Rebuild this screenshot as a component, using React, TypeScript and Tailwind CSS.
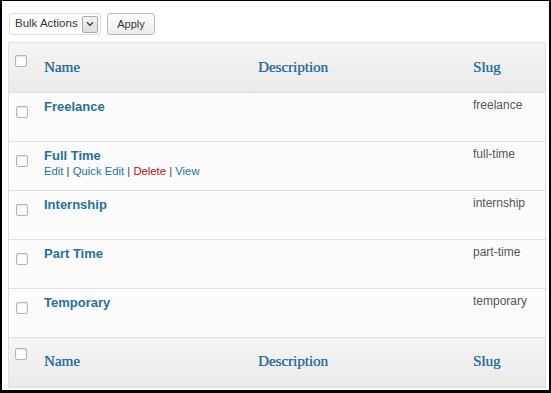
import React from "react";

function Box({ className = "" }: { className?: string }) {
  return (
    <div
      className={
        "w-[12px] h-[12px] border border-[#b4b4b4] rounded-[2px] bg-white shadow-[inset_0_1px_2px_rgba(0,0,0,0.12)] " +
        className
      }
    />
  );
}

const rows = [
  { name: "Freelance", slug: "freelance", actions: false },
  { name: "Full Time", slug: "full-time", actions: true },
  { name: "Internship", slug: "internship", actions: false },
  { name: "Part Time", slug: "part-time", actions: false },
  { name: "Temporary", slug: "temporary", actions: false },
];

function HeadRow({ footer }: { footer?: boolean }) {
  return (
    <div
      className={
        "grid grid-cols-[27px_214px_215px_1fr] h-[49px] bg-gradient-to-b from-[#f5f5f5] to-[#eaeaea] " +
        (footer ? "" : "border-b border-[#dfdfdf] h-[50px]")
      }
    >
      <div className={footer ? "pt-[10px] pl-[6px]" : "pt-[12px] pl-[6px]"}>
        <Box />
      </div>
      {["Name", "Description", "Slug"].map((t) => (
        <div
          key={t}
          className={
            "pl-[8px] font-['Liberation_Serif',serif] text-[15px] leading-[20px] text-[#2f7098] [text-shadow:0.35px_0_0_#2f7098] " +
            (footer ? "pt-[13px]" : "pt-[14px]")
          }
        >
          {t}
        </div>
      ))}
    </div>
  );
}

export default function App() {
  return (
    <div className="w-[551px] h-[393px] bg-white border-black border-l-2 border-r-2 border-t border-b-[3px] overflow-hidden font-['Liberation_Sans',Arial,sans-serif]">
      <div className="flex items-center pl-[7px] pt-[12px]">
        <div className="w-[92px] h-[22px] border border-[#dcdcdc] rounded-[3px] bg-white flex items-center justify-between pl-[5px] pr-[2px]">
          <span className="text-[11.5px] text-[#333] leading-none">Bulk Actions</span>
          <div className="w-[16px] h-[17px] border border-[#a9a9a9] rounded-[2px] bg-gradient-to-b from-[#f4f4f4] to-[#dedede] flex items-center justify-center">
            <svg width="8" height="6" viewBox="0 0 8 6">
              <path d="M1 1.2 L4 4.4 L7 1.2" fill="none" stroke="#444" strokeWidth="1.4" />
            </svg>
          </div>
        </div>
        <div className="ml-[6px] w-[48px] h-[22px] border border-[#bbbbbb] rounded-[3px] bg-gradient-to-b from-white to-[#ececec] flex items-center justify-center text-[11px] text-[#333]">
          Apply
        </div>
      </div>

      <div className="mt-[7px] ml-[6px] w-[538px] border border-[#dfdfdf]">
        <HeadRow />
        {rows.map((r) => (
          <div
            key={r.name}
            className="grid grid-cols-[27px_214px_215px_1fr] h-[49px] bg-[#fcfcfc] border-b border-[#dfdfdf]"
          >
            <div className="pt-[13px] pl-[7px]">
              <Box />
            </div>
            <div className="pl-[8px] pt-[5px]">
              <div className="text-[13px] font-bold leading-[17px] text-[#2a6f95]">{r.name}</div>
              {r.actions && (
                <div className="text-[11.3px] leading-[15px] text-[#444]">
                  <span className="text-[#21759b]">Edit</span> | <span className="text-[#21759b]">Quick Edit</span> |{" "}
                  <span className="text-[#bc0b0b]">Delete</span> | <span className="text-[#21759b]">View</span>
                </div>
              )}
            </div>
            <div />
            <div className="pl-[8px] pt-[4px] text-[12px] leading-[17px] text-[#555]">{r.slug}</div>
          </div>
        ))}
        <HeadRow footer />
      </div>
    </div>
  );
}
